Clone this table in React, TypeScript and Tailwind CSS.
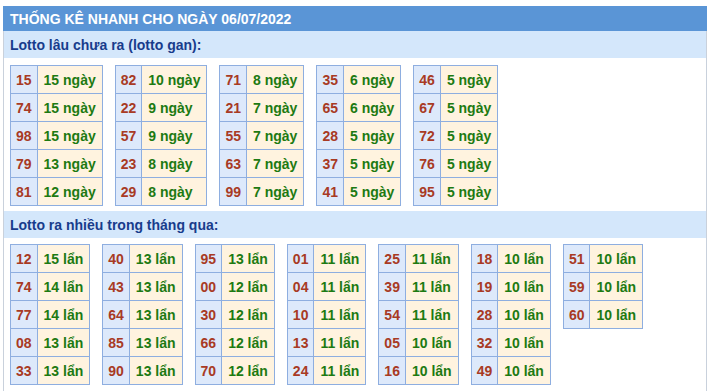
import React from "react";

type Pair = [string, string];

const gan: Pair[][] = [
  [["15", "15 ngày"], ["74", "15 ngày"], ["98", "15 ngày"], ["79", "13 ngày"], ["81", "12 ngày"]],
  [["82", "10 ngày"], ["22", "9 ngày"], ["57", "9 ngày"], ["23", "8 ngày"], ["29", "8 ngày"]],
  [["71", "8 ngày"], ["21", "7 ngày"], ["55", "7 ngày"], ["63", "7 ngày"], ["99", "7 ngày"]],
  [["35", "6 ngày"], ["65", "6 ngày"], ["28", "5 ngày"], ["37", "5 ngày"], ["41", "5 ngày"]],
  [["46", "5 ngày"], ["67", "5 ngày"], ["72", "5 ngày"], ["76", "5 ngày"], ["95", "5 ngày"]],
];

const nhieu: Pair[][] = [
  [["12", "15 lẩn"], ["74", "14 lẩn"], ["77", "14 lẩn"], ["08", "13 lẩn"], ["33", "13 lẩn"]],
  [["40", "13 lẩn"], ["43", "13 lẩn"], ["64", "13 lẩn"], ["85", "13 lẩn"], ["90", "13 lẩn"]],
  [["95", "13 lẩn"], ["00", "12 lẩn"], ["30", "12 lẩn"], ["66", "12 lẩn"], ["70", "12 lẩn"]],
  [["01", "11 lẩn"], ["04", "11 lẩn"], ["10", "11 lẩn"], ["13", "11 lẩn"], ["24", "11 lẩn"]],
  [["25", "11 lẩn"], ["39", "11 lẩn"], ["54", "11 lẩn"], ["05", "10 lẩn"], ["16", "10 lẩn"]],
  [["18", "10 lẩn"], ["19", "10 lẩn"], ["28", "10 lẩn"], ["32", "10 lẩn"], ["49", "10 lẩn"]],
  [["51", "10 lẩn"], ["59", "10 lẩn"], ["60", "10 lẩn"]],
];

function Block({ rows }: { rows: Pair[] }) {
  return (
    <div className="grid grid-cols-[auto_auto] self-start border-l border-t border-[#8eaee0]">
      {rows.map(([n, v], i) => (
        <React.Fragment key={i}>
          <div className="flex h-[28px] items-center justify-center border-b border-r border-[#8eaee0] bg-[#dde9fb] px-[5px] text-[#a83a24]">
            {n}
          </div>
          <div className="flex h-[28px] items-center border-b border-r border-[#8eaee0] bg-[#fff3df] px-[6px] text-[#1d7a12]">
            {v}
          </div>
        </React.Fragment>
      ))}
    </div>
  );
}

export default function App() {
  return (
    <div
      className="h-[391px] w-[708px] overflow-hidden bg-white pt-[6px] pl-[3px] text-[14px] font-bold leading-none"
      style={{ fontFamily: '"Liberation Sans", Arial, sans-serif' }}
    >
      <div className="w-[704px]">
        <div className="flex h-[25px] items-center bg-[#5a95d6] pl-[7px] text-white">
          THỐNG KÊ NHANH CHO NGÀY 06/07/2022
        </div>
        <div className="h-[360px] border-x border-[#c9d1dc]">
          <div className="flex h-[27px] items-center bg-[#d4e7fb] pl-[6px] text-[#183c8c]">
            Lotto lâu chưa ra (lotto gan):
          </div>
          <div className="flex gap-[12px] pl-[6px] pt-[7px] pb-[5px]">
            {gan.map((r, i) => (
              <Block key={i} rows={r} />
            ))}
          </div>
          <div className="flex h-[27px] items-center bg-[#d4e7fb] pl-[6px] text-[#183c8c]">
            Lotto ra nhiều trong tháng qua:
          </div>
          <div className="flex gap-[12px] pl-[6px] pt-[6px]">
            {nhieu.map((r, i) => (
              <Block key={i} rows={r} />
            ))}
          </div>
        </div>
      </div>
    </div>
  );
}
